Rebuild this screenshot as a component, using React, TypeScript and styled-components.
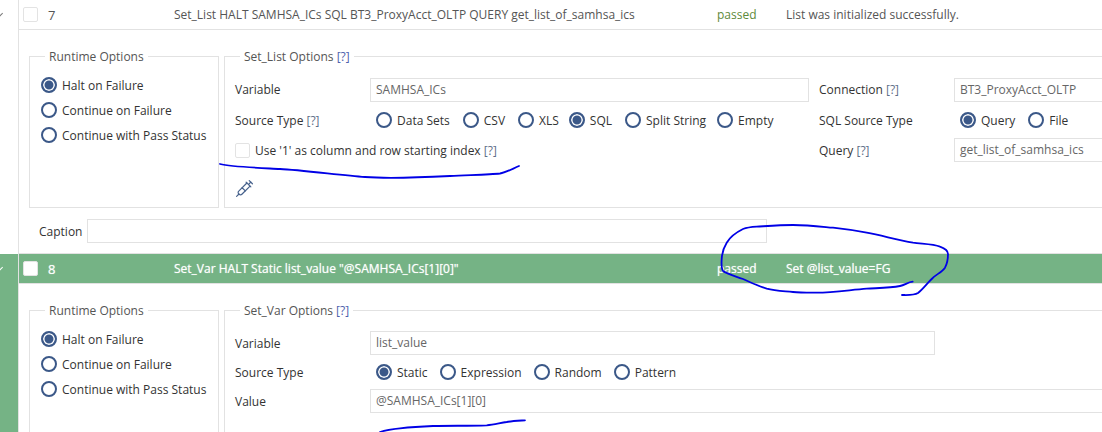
import { ReactNode } from 'react'
import styled, { createGlobalStyle } from 'styled-components'
import { Syringe } from 'lucide-react'

const GlobalStyle = createGlobalStyle`
	html,
	body {
		margin: 0;
		padding: 0;
		background: #fff;
		overflow: hidden;
	}
	* {
		box-sizing: border-box;
	}
`

const Page = styled.div`
	position: relative;
	width: 1102px;
	height: 432px;
	overflow: hidden;
	font-family: 'Open Sans', sans-serif;
	font-size: 12px;
	color: #333;
`

const Step = styled.section`
	display: grid;
	grid-template-columns: 18px 1fr;
`

const Gutter = styled.div<{ $active?: boolean }>`
	margin-top: ${(props) => (props.$active ? '1px' : '0')};
	background: ${(props) => (props.$active ? '#75b385' : '#fff')};
	color: ${(props) => (props.$active ? '#fff' : '#777')};
	overflow: hidden;
`

const Chevron = styled.div`
	margin: 11px 0 0 -3px;
	width: 5px;
	height: 5px;
	border-right: 1px solid currentColor;
	border-bottom: 1px solid currentColor;
	transform: rotate(45deg);
`

const StepBody = styled.div`
	border-left: 1px solid #e2e2e2;
	min-width: 0;
`

const Header = styled.header<{ $active?: boolean }>`
	display: grid;
	grid-template-columns: 155px 543px 69px 1fr;
	align-items: center;
	height: ${(props) => (props.$active ? '31px' : '30px')};
	border-bottom: 1px solid #e2e2e2;
	border-top: ${(props) => (props.$active ? '1px solid #e2e2e2' : 'none')};
	background: ${(props) => (props.$active ? '#75b385' : '#fff')};
	color: ${(props) => (props.$active ? '#fff' : '#555')};
	font-weight: ${(props) => (props.$active ? 500 : 400)};
	text-shadow: ${(props) => (props.$active ? '0 0 1px rgba(255, 255, 255, 0.7)' : 'none')};
`

const HeaderCheck = styled.div`
	display: flex;
	align-items: center;
	gap: 10px;
	padding-left: 4px;
	font-size: 13px;
`

const Status = styled.span<{ $active?: boolean }>`
	color: ${(props) => (props.$active ? '#fff' : '#5e8a3a')};
`

const Box = styled.span`
	display: block;
	width: 15px;
	height: 15px;
	border: 1px solid #e3e3e3;
	border-radius: 2px;
	background: #fff;
`

const Panels = styled.div<{ $height: number }>`
	display: grid;
	grid-template-columns: 190px 1fr;
	column-gap: 5px;
	height: ${(props) => props.$height}px;
	padding: 18px 0 0 10px;
	margin-right: -10px;
`

const Group = styled.fieldset`
	margin: 0;
	padding: 0 10px;
	min-width: 0;
	border: 1px solid #e2e2e2;
	border-radius: 0;
`

const Help = styled.span`
	color: #5f7089;
`

const Legend = styled.legend`
	margin-left: 5px;
	padding: 0 4px;
	font-size: 12px;
	line-height: 17px;
	color: #555;

	${Help} {
		color: #4f62ad;
	}
`

const RadioStack = styled.div`
	display: flex;
	flex-direction: column;
	gap: 9px;
	padding: 12px 0 0 1px;
`

const Radio = styled.label<{ $gap?: number }>`
	display: inline-flex;
	align-items: center;
	gap: 5px;
	height: 16px;
	margin-right: ${(props) => props.$gap ?? 0}px;
	white-space: nowrap;
`

const RadioMark = styled.span<{ $on?: boolean }>`
	display: block;
	flex: none;
	width: 16px;
	height: 16px;
	border-radius: 50%;
	border: 2px solid #3b5888;
	background: ${(props) => (props.$on ? '#3b5888' : '#fff')};
	box-shadow: ${(props) => (props.$on ? 'inset 0 0 0 1.5px #fff' : 'none')};
`

const Form = styled.div`
	display: grid;
	grid-template-columns: 135px 439px 10px 135px 1fr;
	align-items: center;
	padding-top: 12px;
`

const VarForm = styled.div`
	display: grid;
	grid-template-columns: 135px 565px 1fr;
	align-items: center;
	padding-top: 12px;
`

const Label = styled.div`
	white-space: nowrap;
`

const Input = styled.div<{ $wide?: boolean; $nudge?: number }>`
	height: 24px;
	padding: 0 5px;
	line-height: 22px;
	border: 1px solid #e2e2e2;
	color: #666;
	white-space: nowrap;
	overflow: hidden;
	margin-top: ${(props) => props.$nudge ?? 0}px;
	margin-right: ${(props) => (props.$wide ? '-200px' : '0')};
`

const Choices = styled.div<{ $height: number; $span?: string }>`
	display: flex;
	align-items: center;
	padding-left: 6px;
	height: ${(props) => props.$height}px;
	grid-column: ${(props) => props.$span ?? 'auto'};
`

const CheckRow = styled.label`
	grid-column: 1 / 3;
	display: flex;
	align-items: center;
	gap: 5px;
`

const Tool = styled.div`
	padding-top: 17px;
	color: #46618c;
`

const CaptionRow = styled.div`
	display: grid;
	grid-template-columns: 48px 680px;
	align-items: center;
	margin: 11px 0 10px;
	padding-left: 20px;
`

const Scribble = styled.svg`
	position: absolute;
	inset: 0;
	pointer-events: none;
`

function RuntimeOptions() {
	return (
		<Group>
			<Legend>Runtime Options</Legend>
			<RadioStack>
				<Radio>
					<RadioMark $on />
					Halt on Failure
				</Radio>
				<Radio>
					<RadioMark />
					Continue on Failure
				</Radio>
				<Radio>
					<RadioMark />
					Continue with Pass Status
				</Radio>
			</RadioStack>
		</Group>
	)
}

function Choice(props: { on?: boolean; gap: number; children: ReactNode }) {
	return (
		<Radio $gap={props.gap}>
			<RadioMark $on={props.on} />
			{props.children}
		</Radio>
	)
}

export default function App() {
	return (
		<Page>
			<GlobalStyle />

			<Step>
				<Gutter>
					<Chevron />
				</Gutter>
				<StepBody>
					<Header>
						<HeaderCheck>
							<Box />7
						</HeaderCheck>
						<span>Set_List HALT SAMHSA_ICs SQL BT3_ProxyAcct_OLTP QUERY get_list_of_samhsa_ics</span>
						<Status>passed</Status>
						<span>List was initialized successfully.</span>
					</Header>

					<Panels $height={178}>
						<RuntimeOptions />
						<Group>
							<Legend>
								Set_List Options <Help>[?]</Help>
							</Legend>
							<Form>
								<Label>Variable</Label>
								<Input>SAMHSA_ICs</Input>
								<span />
								<Label>
									Connection <Help>[?]</Help>
								</Label>
								<Input $wide $nudge={1}>
									BT3_ProxyAcct_OLTP
								</Input>

								<Label>
									Source Type <Help>[?]</Help>
								</Label>
								<Choices $height={36}>
									<Choice gap={13}>Data Sets</Choice>
									<Choice gap={13}>CSV</Choice>
									<Choice gap={10}>XLS</Choice>
									<Choice on gap={13}>
										SQL
									</Choice>
									<Choice gap={11}>Split String</Choice>
									<Choice gap={0}>Empty</Choice>
								</Choices>
								<span />
								<Label>SQL Source Type</Label>
								<Choices $height={36}>
									<Choice on gap={13}>
										Query
									</Choice>
									<Choice gap={0}>File</Choice>
								</Choices>

								<CheckRow>
									<Box />
									<span>
										Use '1' as column and row starting index <Help>[?]</Help>
									</span>
								</CheckRow>
								<span />
								<Label>
									Query <Help>[?]</Help>
								</Label>
								<Input $wide>get_list_of_samhsa_ics</Input>
							</Form>
							<Tool>
								<Syringe size={19} strokeWidth={1.5} />
							</Tool>
						</Group>
					</Panels>

					<CaptionRow>
						<Label>Caption</Label>
						<Input />
					</CaptionRow>
				</StepBody>
			</Step>

			<Step>
				<Gutter $active>
					<Chevron />
				</Gutter>
				<StepBody>
					<Header $active>
						<HeaderCheck>
							<Box />8
						</HeaderCheck>
						<span>Set_Var HALT Static list_value "@SAMHSA_ICs[1][0]"</span>
						<Status $active>passed</Status>
						<span>Set @list_value=FG</span>
					</Header>

					<Panels $height={170}>
						<RuntimeOptions />
						<Group>
							<Legend>
								Set_Var Options <Help>[?]</Help>
							</Legend>
							<VarForm>
								<Label>Variable</Label>
								<Input>list_value</Input>
								<span />
								<Label>Source Type</Label>
								<Choices $height={34} $span="2 / 4">
									<Choice on gap={12}>
										Static
									</Choice>
									<Choice gap={12}>Expression</Choice>
									<Choice gap={12}>Random</Choice>
									<Choice gap={0}>Pattern</Choice>
								</Choices>
								<Label>Value</Label>
								<Input $wide>@SAMHSA_ICs[1][0]</Input>
							</VarForm>
						</Group>
					</Panels>
				</StepBody>
			</Step>

			<Scribble width="1102" height="432" viewBox="0 0 1102 432" fill="none" stroke="#0000e6" strokeWidth="1.8" strokeLinecap="round" strokeLinejoin="round">
				<path d="M220 164 C232 167 262 168 280 169 C300 170 340 175 365 177 C385 178.5 430 177 450 176 C470 175 490 174.5 500 173.5 C506 172.5 512 169 519 166" />
				<path d="M912.7 281.7 C908 282 905 285 900 286 C890 288 878 288 866.7 288.7 C850 290 833 292.7 816.7 292.7 C806 292.7 800 292.8 793 292 C782 291 775 291 766.7 288.7 C758 286 750 282 743 279 C735 276 727 274 723 271 C721 268 721.5 263 721.7 259 C722 252 724 247 726.7 242.7 C730 237 737 232 743 229 C747 227.5 752 227 756.7 226.7 C768 226 780 225 793 225 C808 225 820 226.5 833 227.7 C845 229 855 230.5 866.7 232.7 C882 235.5 897 240 913 242.7 C922 244 933 244 940 246.7 C945 248.5 948 250.5 948 254 C948 259 947.5 263 945 267.7 C942 272 937 274 933 277.7 C928 282 924 288 918 293 C914 295.5 908 295 902 295" />
				<path d="M380 432 C386 430 393 429 400 428.3 C410 427.3 422 426.5 433 426 C450 425.5 470 426 486.7 425.3 C494 424.5 500 423 506.7 422 C512 421 519 420.7 525 420.3" />
			</Scribble>
		</Page>
	)
}
